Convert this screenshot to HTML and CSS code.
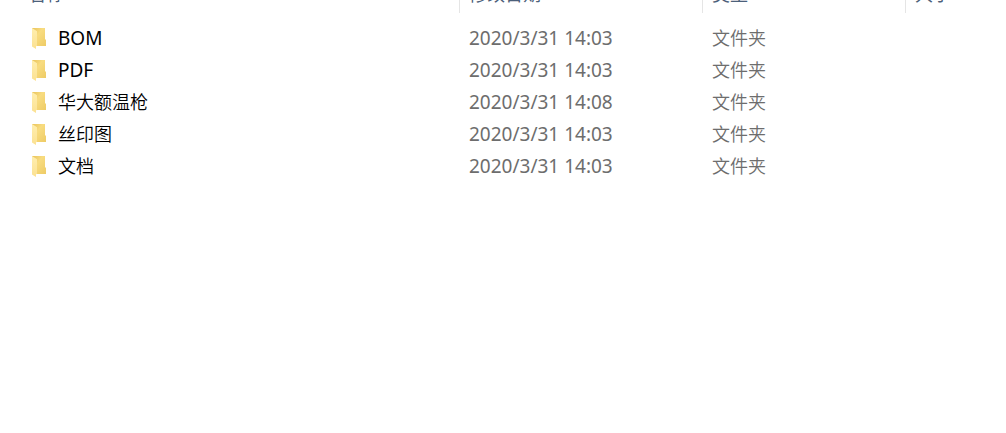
FILE: index.html
```
<!DOCTYPE html>
<html lang="zh-CN">
<head>
  <meta charset="UTF-8">
  <meta name="viewport" content="width=device-width, initial-scale=1.0">
  <title>文件夹</title>
  <link rel="stylesheet" href="styles.css">
</head>
<body>

  <!-- 文件夹图标 -->
  <svg class="sprite" aria-hidden="true">
    <defs>
      <linearGradient id="back" x1="0" y1="0" x2="1" y2="1">
        <stop offset="0" stop-color="#e8c25a"/>
        <stop offset="0.4" stop-color="#f8dc80"/>
        <stop offset="1" stop-color="#eecb65"/>
      </linearGradient>
      <linearGradient id="flap" x1="0" y1="0" x2="0" y2="1">
        <stop offset="0" stop-color="#ffeeae"/>
        <stop offset="1" stop-color="#fbe192"/>
      </linearGradient>
      <symbol id="folder" viewBox="0 0 14 21">
        <path fill="url(#back)" d="M0 0h13v11l1 1v6H4L0 14z"/>
        <path fill="url(#flap)" d="M0 0l5 3.200v14.800l-1 .2V21L0 18.500z"/>
      </symbol>
    </defs>
  </svg>

  <main class="file-list">
    <table class="files">
      <thead>
        <tr>
          <th class="col-name" scope="col">名称</th>
          <th class="col-date" scope="col">修改日期</th>
          <th class="col-type" scope="col">类型</th>
          <th class="col-size" scope="col">大小</th>
        </tr>
      </thead>
      <tbody>
        <tr>
          <td><div class="name"><svg class="icon"><use href="#folder"/></svg><span class="latin">BOM</span></div></td>
          <td class="latin">2020/3/31 14:03</td>
          <td>文件夹</td>
          <td></td>
        </tr>
        <tr>
          <td><div class="name"><svg class="icon"><use href="#folder"/></svg><span class="latin">PDF</span></div></td>
          <td class="latin">2020/3/31 14:03</td>
          <td>文件夹</td>
          <td></td>
        </tr>
        <tr>
          <td><div class="name"><svg class="icon"><use href="#folder"/></svg><span>华大额温枪</span></div></td>
          <td class="latin">2020/3/31 14:08</td>
          <td>文件夹</td>
          <td></td>
        </tr>
        <tr>
          <td><div class="name"><svg class="icon"><use href="#folder"/></svg><span>丝印图</span></div></td>
          <td class="latin">2020/3/31 14:03</td>
          <td>文件夹</td>
          <td></td>
        </tr>
        <tr>
          <td><div class="name"><svg class="icon"><use href="#folder"/></svg><span>文档</span></div></td>
          <td class="latin">2020/3/31 14:03</td>
          <td>文件夹</td>
          <td></td>
        </tr>
      </tbody>
    </table>
  </main>

</body>
</html>
```
FILE: styles.css
```
* {
  box-sizing: border-box;
}

body {
  margin: 0;
  background: #fff;
  font-family: "Noto Sans", "Noto Sans CJK SC", sans-serif;
  font-size: 18px;
  font-weight: 350;
  color: #6d6d6d;
}

.sprite {
  display: block;
  width: 0;
  height: 0;
}

.file-list {
  min-height: 100vh;
  overflow: hidden;
}

/* 表头有一部分滚动到窗口上方 */
.files {
  width: 100%;
  margin-top: -25px;
  border-collapse: separate;
  border-spacing: 0;
  table-layout: fixed;
}

.files th {
  height: 38px;
  padding: 0 9px;
  border-right: 1px solid #e5e5e5;
  line-height: 24px;
  font-weight: 400;
  text-align: left;
  color: #4c607a;
}

.files .col-name {
  width: 460px;
  padding-left: 28px;
}

.col-date {
  width: 243px;
}

.col-type {
  width: 203px;
}

.files .col-size {
  border-right: none;
}

/* 表头与第一行之间的空隙 */
.files tbody::before {
  content: "";
  display: block;
  height: 9px;
}

.files td {
  height: 32px;
  padding: 0 9px;
  line-height: 28px;
  white-space: nowrap;
}

.files td:first-child {
  padding-left: 32px;
}

.name {
  display: flex;
  align-items: center;
  gap: 12px;
  color: #000;
}

.icon {
  width: 14px;
  height: 21px;
}

.files .latin {
  font-size: 19px;
  font-weight: 400;
}
```
